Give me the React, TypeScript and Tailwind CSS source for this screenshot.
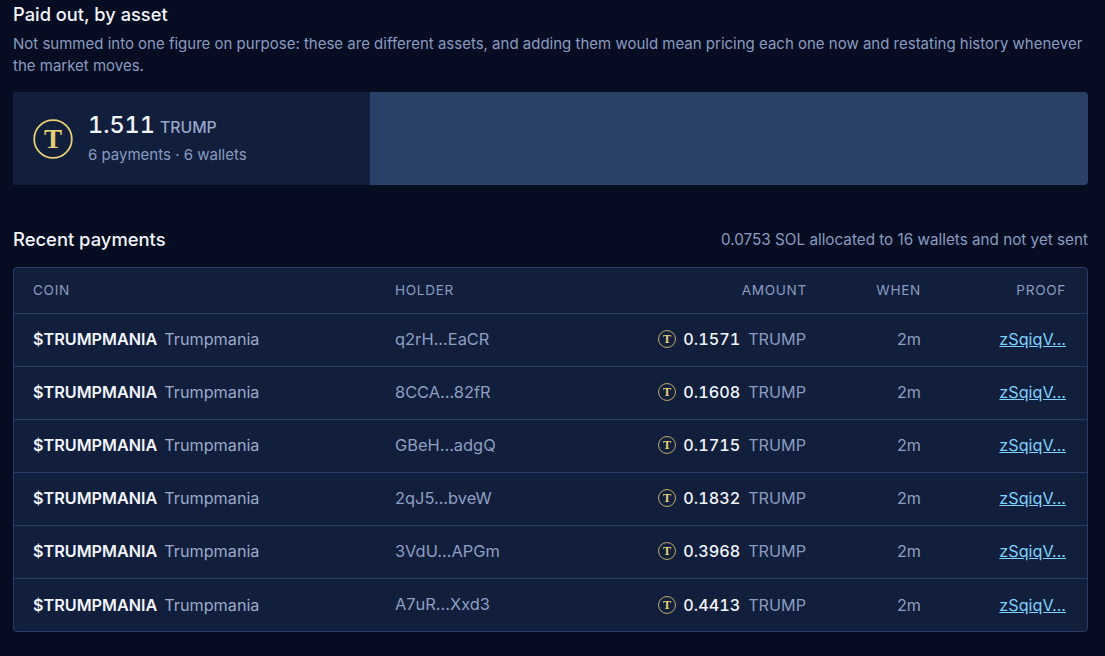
const Coin = ({ size }: { size: number }) => (
  <svg width={size} height={size} viewBox="0 0 40 40" className="shrink-0">
    <circle cx="20" cy="20" r="18.8" fill="none" stroke="#e6cf75" strokeWidth="1.8" />
    <text x="20" y="29" textAnchor="middle" fontFamily="'Liberation Serif', serif" fontWeight="700" fontSize="27" fill="#e6cf75">T</text>
  </svg>
);

const rows = [
  ["q2rH...EaCR", "0.1571"],
  ["8CCA...82fR", "0.1608"],
  ["GBeH...adgQ", "0.1715"],
  ["2qJ5...bveW", "0.1832"],
  ["3VdU...APGm", "0.3968"],
  ["A7uR...Xxd3", "0.4413"],
];

export default function App() {
  return (
    <div className="h-[656px] w-[1105px] overflow-hidden bg-[#060d22] pl-[13px] font-['Inter',sans-serif]">
      <div className="w-[1075px]">
        <h2 className="pt-[3px] text-[18.3px] leading-[23px] font-medium text-[#f1f5fb]">Paid out, by asset</h2>
        <p className="mt-[7px] text-[15px] leading-[22px] text-[#8a9bc0]">
          Not summed into one figure on purpose: these are different assets, and adding them would mean pricing each one now and restating history whenever the market moves.
        </p>
        <div className="mt-[15px] flex h-[93px] overflow-hidden rounded bg-[#2a4069]">
          <div className="flex w-[357px] items-center gap-[15px] bg-[#111e3c] pl-5">
            <Coin size={40} />
            <div className="-mt-[3px]">
              <div className="flex items-baseline gap-[5px] text-[#f1f5fb]">
                <span className="text-[23.4px] leading-[30px] font-medium tabular-nums">1.511</span>
                <span className="text-[15.8px] font-medium text-[#98a7c8]">TRUMP</span>
              </div>
              <div className="mt-[5px] text-[15px] leading-[20px] text-[#8a9bc0]">6 payments · 6 wallets</div>
            </div>
          </div>
        </div>
        <div className="mt-[41px] flex h-[26px] items-center justify-between">
          <h3 className="text-[18.4px] leading-[24px] font-medium text-[#f1f5fb]">Recent payments</h3>
          <span className="pt-[3px] text-[15.25px] text-[#8a9bc0]">0.0753 SOL allocated to 16 wallets and not yet sent</span>
        </div>
        <div className="mt-[15px] overflow-hidden rounded border border-[#2a3c66] bg-[#111e3c]">
          <table className="w-full table-fixed border-collapse">
            <thead>
              <tr className="h-[45px] text-[13.6px] tracking-[0.68px] text-[#8a9bc0]">
                <th className="w-[361px] pl-[19px] text-left font-normal">COIN</th>
                <th className="w-[200px] pl-5 text-left font-normal">HOLDER</th>
                <th className="w-[232px] text-right font-normal">AMOUNT</th>
                <th className="w-[115px] pr-px text-right font-normal">WHEN</th>
                <th className="pr-[21px] text-right font-normal">PROOF</th>
              </tr>
            </thead>
            <tbody>
              {rows.map(([holder, amount]) => (
                <tr key={holder} className="h-[53px] border-t border-[#2a3c66] text-[16.2px]">
                  <td className="pl-[19px]">
                    <span className="font-semibold text-[#f1f5fb]">$TRUMPMANIA</span>
                    <span className="ml-[7px] text-[#9aa9ca]">Trumpmania</span>
                  </td>
                  <td className="pl-5 text-[16.4px] text-[#8e9fc2]">{holder}</td>
                  <td className="pr-px">
                    <div className="flex items-center justify-end">
                      <Coin size={18} />
                      <span className="ml-[7px] font-medium tabular-nums text-[#f1f5fb]">{amount}</span>
                      <span className="ml-2 text-[#8a9bc0]">TRUMP</span>
                    </div>
                  </td>
                  <td className="pr-px text-right text-[#8e9fc2]">2m</td>
                  <td className="pr-[21px] text-right">
                    <a href="#" className="text-[#7dd3fc] underline">zSqiqV...</a>
                  </td>
                </tr>
              ))}
            </tbody>
          </table>
        </div>
      </div>
    </div>
  );
}
